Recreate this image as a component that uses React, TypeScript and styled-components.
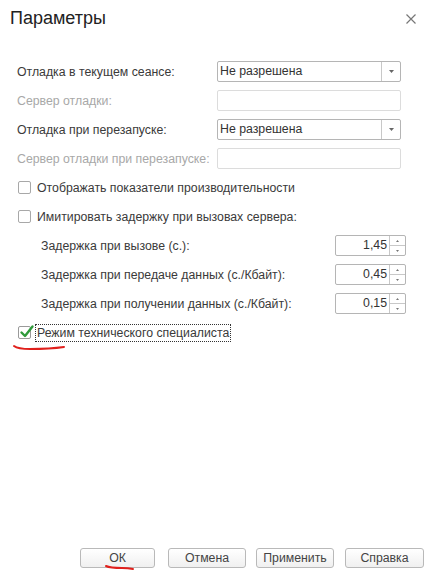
import React from "react";
import styled, { createGlobalStyle } from "styled-components";

const Global = createGlobalStyle`
  html, body { margin: 0; padding: 0; background: #fff; }
  body { font-family: Arial, "Liberation Sans", sans-serif; }
  * { box-sizing: border-box; }
`;

const Dialog = styled.div`
  position: relative;
  width: 432px;
  height: 577px;
  display: flex;
  flex-direction: column;
  background: #fff;
  color: #3a3a3a;
  font-size: 12.3px;
  overflow: hidden;
`;

const Header = styled.div`
  height: 57px;
  display: flex;
  align-items: flex-start;
  justify-content: space-between;
  padding: 7px 14px 0 10px;
`;

const Title = styled.div`
  font-size: 18px;
  color: #222;
  line-height: 22px;
`;

const Close = styled.div`
  width: 14px;
  height: 14px;
  margin-top: 5px;
  display: flex;
  align-items: center;
  justify-content: center;
`;

const Form = styled.div`
  display: flex;
  flex-direction: column;
  padding: 0 0 0 17px;
`;

const Row = styled.div<{ $indent?: number }>`
  height: 29px;
  display: flex;
  align-items: center;
  padding-left: ${(p) => p.$indent || 0}px;
`;

const Label = styled.div<{ $disabled?: boolean; $width?: number }>`
  width: ${(p) => p.$width || 200}px;
  flex: none;
  color: ${(p) => (p.$disabled ? "#a8a8a8" : "#3a3a3a")};
  white-space: nowrap;
`;

const Select = styled.div`
  width: 184px;
  height: 21px;
  display: flex;
  border: 1px solid #b5b5b5;
  border-radius: 2px;
  background: #fff;
`;

const SelectValue = styled.div`
  flex: 1;
  padding-left: 2px;
  line-height: 19px;
  color: #333;
`;

const SelectButton = styled.div`
  width: 19px;
  border-left: 1px solid #c8c8c8;
  display: flex;
  align-items: center;
  justify-content: center;
`;

const Input = styled.div`
  width: 184px;
  height: 21px;
  border: 1px solid #dcdcdc;
  border-radius: 2px;
`;

const Box = styled.div<{ $checked?: boolean }>`
  position: relative;
  width: 13px;
  height: 13px;
  flex: none;
  margin-left: 1px;
  margin-right: 6px;
  border: 1px solid ${(p) => (p.$checked ? "#9a9a9a" : "#a8a8a8")};
  border-radius: 2px;
  background: #fff;
`;

const Check = styled.svg`
  position: absolute;
  left: 0px;
  top: -3px;
`;

const CheckText = styled.div<{ $focus?: boolean }>`
  color: #3a3a3a;
  white-space: nowrap;
  padding: 1px;
  border: 1px dotted ${(p) => (p.$focus ? "#333" : "transparent")};
  margin-left: -2px;
`;

const Spin = styled.div`
  margin-left: auto;
  margin-right: 26px;
  width: 71px;
  height: 21px;
  display: flex;
  border: 1px solid #b5b5b5;
  border-radius: 2px;
`;

const SpinValue = styled.div`
  flex: 1;
  text-align: right;
  padding-right: 2px;
  line-height: 19px;
  color: #333;
`;

const SpinArrows = styled.div`
  width: 16px;
  border-left: 1px solid #c8c8c8;
  display: flex;
  flex-direction: column;
`;

const SpinHalf = styled.div<{ $top?: boolean }>`
  flex: 1;
  display: flex;
  align-items: center;
  justify-content: center;
  border-bottom: ${(p) => (p.$top ? "1px solid #c8c8c8" : "none")};
`;

const Footer = styled.div`
  margin-top: auto;
  display: flex;
  justify-content: flex-end;
  padding: 0 8px 9px 0;
`;

const Button = styled.div<{ $w: number; $gap?: number }>`
  width: ${(p) => p.$w}px;
  margin-left: ${(p) => p.$gap || 0}px;
  height: 20px;
  border: 1px solid #b9b9b9;
  border-radius: 3px;
  background: linear-gradient(#ffffff, #f0f0f0);
  display: flex;
  align-items: center;
  justify-content: center;
  color: #444;
  font-size: 12.3px;
`;

const Marks = styled.svg`
  position: absolute;
  left: 0;
  top: 0;
  pointer-events: none;
`;

const Arrow = () => (
  <svg width="5" height="3" viewBox="0 0 5 3">
    <path d="M0 0 L5 0 L2.5 3 Z" fill="#666" />
  </svg>
);

const SelectField = ({ value }: { value: string }) => (
  <Select>
    <SelectValue>{value}</SelectValue>
    <SelectButton>
      <Arrow />
    </SelectButton>
  </Select>
);

const Spinner = ({ value }: { value: string }) => (
  <Spin>
    <SpinValue>{value}</SpinValue>
    <SpinArrows>
      <SpinHalf $top>
        <svg width="3" height="2" viewBox="0 0 3 2"><path d="M0 2 L1.5 0 L3 2Z" fill="#777" /></svg>
      </SpinHalf>
      <SpinHalf>
        <svg width="3" height="2" viewBox="0 0 3 2"><path d="M0 0 L3 0 L1.5 2Z" fill="#777" /></svg>
      </SpinHalf>
    </SpinArrows>
  </Spin>
);

export default function App() {
  return (
    <>
      <Global />
      <Dialog>
        <Header>
          <Title>Параметры</Title>
          <Close>
            <svg width="10" height="10" viewBox="0 0 10 10">
              <path d="M0.5 0.5 L9.5 9.5 M9.5 0.5 L0.5 9.5" stroke="#777" strokeWidth="1.2" />
            </svg>
          </Close>
        </Header>
        <Form>
          <Row>
            <Label>Отладка в текущем сеансе:</Label>
            <SelectField value="Не разрешена" />
          </Row>
          <Row>
            <Label $disabled>Сервер отладки:</Label>
            <Input />
          </Row>
          <Row>
            <Label>Отладка при перезапуске:</Label>
            <SelectField value="Не разрешена" />
          </Row>
          <Row>
            <Label $disabled>Сервер отладки при перезапуске:</Label>
            <Input />
          </Row>
          <Row>
            <Box />
            <CheckText>Отображать показатели производительности</CheckText>
          </Row>
          <Row>
            <Box />
            <CheckText>Имитировать задержку при вызовах сервера:</CheckText>
          </Row>
          <Row $indent={24}>
            <Label $width={270}>Задержка при вызове (с.):</Label>
            <Spinner value="1,45" />
          </Row>
          <Row $indent={24}>
            <Label $width={270}>Задержка при передаче данных (с./Кбайт):</Label>
            <Spinner value="0,45" />
          </Row>
          <Row $indent={24}>
            <Label $width={270}>Задержка при получении данных (с./Кбайт):</Label>
            <Spinner value="0,15" />
          </Row>
          <Row>
            <Box $checked>
              <Check width="16" height="16" viewBox="0 0 16 16">
                <path d="M2.5 8.5 L6 12 L13.5 2.5" fill="none" stroke="#2f9a3a" strokeWidth="2.4" strokeLinecap="round" strokeLinejoin="round" />
              </Check>
            </Box>
            <CheckText $focus>Режим технического специалиста</CheckText>
          </Row>
        </Form>
        <Footer>
          <Button $w={75}>ОК</Button>
          <Button $w={78} $gap={13}>Отмена</Button>
          <Button $w={78} $gap={10}>Применить</Button>
          <Button $w={79} $gap={11}>Справка</Button>
        </Footer>
        <Marks width="432" height="577" viewBox="0 0 432 577">
          <path d="M14 346 Q18 349 30 349 Q50 349 64 347" fill="none" stroke="#e0201c" strokeWidth="2" strokeLinecap="round" />
          <path d="M106 566 Q110 568 122 568 Q128 568 133 569" fill="none" stroke="#e0201c" strokeWidth="2" strokeLinecap="round" />
        </Marks>
      </Dialog>
    </>
  );
}
